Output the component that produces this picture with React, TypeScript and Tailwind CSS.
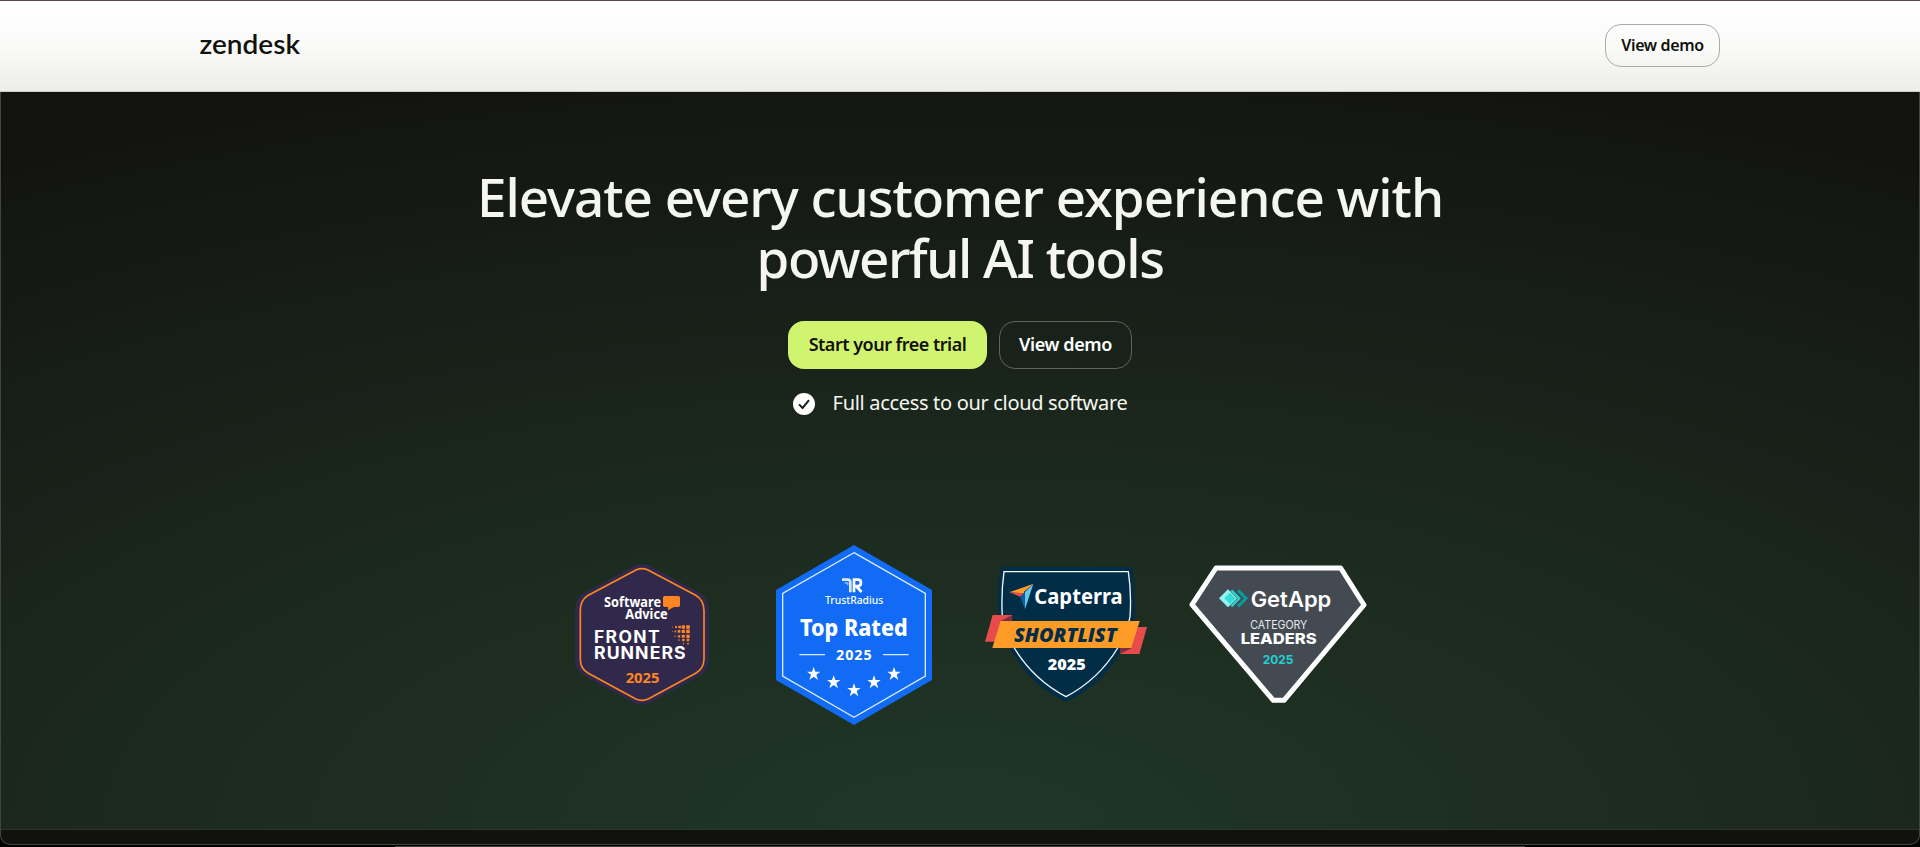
import type { ReactNode } from "react";

function FitText(props: {
  x: number;
  y: number;
  size: number;
  width: number;
  className: string;
  children: ReactNode;
}) {
  return (
    <text
      x={props.x}
      y={props.y}
      fontSize={props.size}
      textLength={props.width}
      lengthAdjust="spacingAndGlyphs"
      className={props.className}
    >
      {props.children}
    </text>
  );
}

function Logo() {
  return (
    <svg viewBox="-2 0 104 36" className="h-9 w-[104px]" aria-label="zendesk">
      <FitText x={-0.5} y={25.5} size={26} width={100.5} className="fill-[#11110d] font-['Lato'] font-semibold">
        zendesk
      </FitText>
    </svg>
  );
}

const dots = [
  [337, 231, 3], [348, 231, 6], [359, 231, 8], [370, 231, 10], [384, 231, 11],
  [337, 244, 3], [346, 244, 5], [357, 244, 8], [370, 244, 10], [384, 244, 11],
  [345, 259, 4], [357, 259, 7], [370, 259, 9], [384, 259, 10],
  [357, 270, 4], [370, 270, 7], [384, 270, 8],
  [370, 281, 4], [384, 281, 5],
];

function SoftwareAdviceBadge() {
  return (
    <svg viewBox="45 39 402 426" className="mb-0.5 h-[142px] w-[134px]">
      <path d="M222 48Q246 36 270 48L417 127Q447 145 447 179V330Q447 362 417 379L270 458Q246 472 222 458L75 379Q45 362 45 330V179Q45 145 75 127Z" fill="#30294b" />
      <path d="M228 60Q246 52 264 60L407 136Q431 150 432 181V328Q431 357 407 370L266 446Q246 456 226 446L85 370Q61 357 61 328V181Q61 150 85 136Z" fill="none" stroke="#ff8522" strokeWidth="5" />
      <FitText x={132} y={170} size={43} width={171} className="fill-white font-['Noto_Sans'] font-bold">Software</FitText>
      <FitText x={196} y={207} size={42} width={127} className="fill-white font-['Noto_Sans'] font-bold">Advice</FitText>
      <path d="M314 138H355Q360 138 360 143V166Q360 171 355 171H342L324 181V171H314Q309 171 309 166V143Q309 138 314 138Z" fill="#ff8522" />
      {dots.map(([x, y, s]) => (
        <rect key={`${x}-${y}`} x={x - s / 2} y={y - s / 2} width={s} height={s} rx="1.5" fill="#ff8522" />
      ))}
      <FitText x={102} y={279} size={51} width={201} className="fill-white font-['Inter'] font-bold tracking-[4px]">FRONT</FitText>
      <FitText x={102} y={327} size={51} width={278} className="fill-white font-['Inter'] font-bold tracking-[3px]">RUNNERS</FitText>
      <FitText x={197} y={399} size={41} width={101} className="fill-[#ff8522] font-['Noto_Sans'] font-bold">2025</FitText>
    </svg>
  );
}

const stars = [[161, 432], [221, 457], [282, 481], [342, 457], [402, 432]];

function TrustRadiusBadge() {
  return (
    <svg viewBox="48 45 468 540" className="h-[180px] w-[156px]">
      <path d="M282 45L516 180V450L282 585L48 450V180Z" fill="#116bf5" />
      <path d="M282 68L496 190V438L282 562L68 438V190Z" fill="none" stroke="#dbe9ff" strokeWidth="4" />
      <g fill="none" strokeWidth="8">
        <path d="M246 149H264Q271 149 271 157V187" stroke="#dbe8ff" />
        <path d="M254 159H263V166" stroke="#8fbaff" strokeWidth="5" />
        <path d="M282 187V149H293Q303 149 303 158Q303 168 293 168H288L305 186" stroke="#ffffff" />
      </g>
      <FitText x={195} y={223} size={33} width={175} className="fill-white font-['Noto_Sans'] font-medium">TrustRadius</FitText>
      <FitText x={120} y={318} size={68} width={323} className="fill-white font-['Noto_Sans'] font-extrabold">Top Rated</FitText>
      <path d="M118 374H195M369 374H446" stroke="#dbe9ff" strokeWidth="4" />
      <FitText x={228} y={390} size={44} width={110} className="fill-white font-['Noto_Sans'] font-bold tracking-[3px]">2025</FitText>
      {stars.map(([x, y]) => (
        <path key={x} transform={`translate(${x} ${y})`} d="M0-21L5-7H20L8 2L13 18L0 8L-13 18L-8 2L-20-7H-5Z" fill="#fff" />
      ))}
    </svg>
  );
}

function CapterraBadge() {
  return (
    <svg viewBox="45 48 486 408" className="mb-0.5 h-[136px] w-[162px]">
      <path d="M92 51H486Q497 130 494 200Q485 250 458 294Q400 405 288 456Q176 405 120 294Q90 250 84 200Q80 130 92 51Z" fill="#012d47" />
      <path d="M102 65H475Q485 130 480 200Q472 250 443 294Q386 388 288 440Q190 388 133 294Q104 250 97 200Q93 130 102 65Z" fill="none" stroke="#f3f7fa" strokeWidth="4" />
      <path d="M68 195H127L106 275H45Z" fill="#e74b4b" />
      <path d="M127 195V213H92Z" fill="#7c2e43" />
      <path d="M472 231H531L508 312H450Z" fill="#e74b4b" />
      <path d="M450 312V294H486Z" fill="#7c2e43" />
      <path d="M92 213H509L484 294H67Z" fill="#ff9c27" />
      <path d="M118 127L190 101L162 125V130Z" fill="#ff9e28" />
      <path d="M118 127L164 130L150 140Z" fill="#e74b4b" />
      <path d="M190 101L165 178V126Z" fill="#66c4ee" />
      <path d="M165 126V178L150 140Z" fill="#135a9b" />
      <FitText x={193} y={163} size={64} width={265} className="fill-white font-['Noto_Sans'] font-bold">Capterra</FitText>
      <FitText x={132} y={275} size={58} width={308} className="fill-[#012d47] font-['Open_Sans'] font-extrabold italic">SHORTLIST</FitText>
      <FitText x={233} y={360} size={48} width={114} className="fill-white font-['Open_Sans'] font-extrabold">2025</FitText>
    </svg>
  );
}

function GetAppBadge() {
  return (
    <svg viewBox="27 46 534 414" className="mb-0.5 h-[138px] w-[178px]">
      <path d="M108 55H482L552 166L312 452H280L36 165Z" fill="#444a52" stroke="#fff" strokeWidth="15" strokeLinejoin="round" />
      <path d="M117 146L144 119L171 146L144 173Z" fill="#94f3ef" />
      <path d="M133 146L150 129L167 146L150 163Z" fill="#36dcda" />
      <path d="M154 122L178 146L154 170" fill="none" stroke="#28d4d2" strokeWidth="7" />
      <path d="M174 122L198 146L174 170" fill="none" stroke="#079d9f" strokeWidth="9" />
      <FitText x={212} y={171} size={66} width={242} className="fill-white font-['Inter'] font-semibold">GetApp</FitText>
      <FitText x={211} y={238} size={34} width={171} className="fill-[#e9eaec] font-['Inter'] font-normal">CATEGORY</FitText>
      <FitText x={182} y={283} size={44} width={228} className="fill-white font-['Inter'] font-extrabold">LEADERS</FitText>
      <FitText x={248} y={342} size={37} width={92} className="fill-[#20cfd0] font-['Inter'] font-bold">2025</FitText>
    </svg>
  );
}

function CheckIcon() {
  return (
    <svg viewBox="0 0 22 22" className="mt-1 size-[22px]">
      <circle cx="11" cy="11" r="11" fill="#fff" />
      <path d="M6 11.4L9.6 15L16 7.2" fill="none" stroke="#19211a" strokeWidth="2" />
    </svg>
  );
}

export default function App() {
  return (
    <div className="flex h-[847px] w-full flex-col bg-black font-['Noto_Sans',sans-serif]">
      <header className="flex h-[92px] shrink-0 items-start justify-between border-t border-b border-t-[#5a4550] border-b-[#cbcbc9] bg-linear-to-b from-white via-[#fafaf9] to-[#ededec] px-[200px]">
        <div className="mt-[27px] -ml-[2px]">
          <Logo />
        </div>
        <button className="mt-[23px] flex h-[43px] w-[115px] items-center justify-center rounded-2xl border border-[#aaaaa9] pb-0.5 text-base font-semibold whitespace-nowrap tracking-[-0.35px] text-[#11110d]">
          View demo
        </button>
      </header>
      <div className="flex h-[753px] shrink-0 flex-col overflow-hidden rounded-b-[10px] border-x border-b border-[#41443f] bg-[#11120d]">
        <main className="flex h-[737px] shrink-0 flex-col items-center bg-[radial-gradient(ellipse_1900px_780px_at_50%_100%,#203728_0%,#1c2a1e_43%,#171d17_75%,#141611_94%,#12130e_100%)] pt-[74px]">
          <h1 className="flex flex-col items-center text-[53px] leading-[61px] font-[550] whitespace-nowrap text-[#f6f6f1]">
            <span className="tracking-[-1.02px]">Elevate every customer experience with</span>
            <span className="tracking-[-1.5px]">powerful AI tools</span>
          </h1>
          <div className="mt-[33px] flex gap-3">
            <button className="flex h-12 w-[199px] items-center justify-center rounded-2xl bg-[#d1f470] pb-0.5 text-lg font-semibold whitespace-nowrap tracking-[-0.5px] text-[#11110d]">
              Start your free trial
            </button>
            <button className="flex h-12 w-[133px] items-center justify-center rounded-2xl border border-[#5e645e] pb-0.5 text-lg font-semibold whitespace-nowrap tracking-[-0.4px] text-white">
              View demo
            </button>
          </div>
          <div className="mt-5 flex h-[30px] gap-[18px]">
            <CheckIcon />
            <p className="text-xl leading-7 whitespace-nowrap tracking-[-0.32px] text-[#f6f6f1]">Full access to our cloud software</p>
          </div>
          <div className="mt-[126px] ml-[22px] flex w-[792px] items-center">
            <SoftwareAdviceBadge />
            <div className="mr-[53px] ml-[67px]">
              <TrustRadiusBadge />
            </div>
            <CapterraBadge />
            <div className="ml-[42px]">
              <GetAppBadge />
            </div>
          </div>
        </main>
        <div className="h-[15px] border-t border-[#30332e]" />
      </div>
      <div className="mt-px h-px w-[1130px] shrink-0 self-center bg-[#41443f]" />
    </div>
  );
}
